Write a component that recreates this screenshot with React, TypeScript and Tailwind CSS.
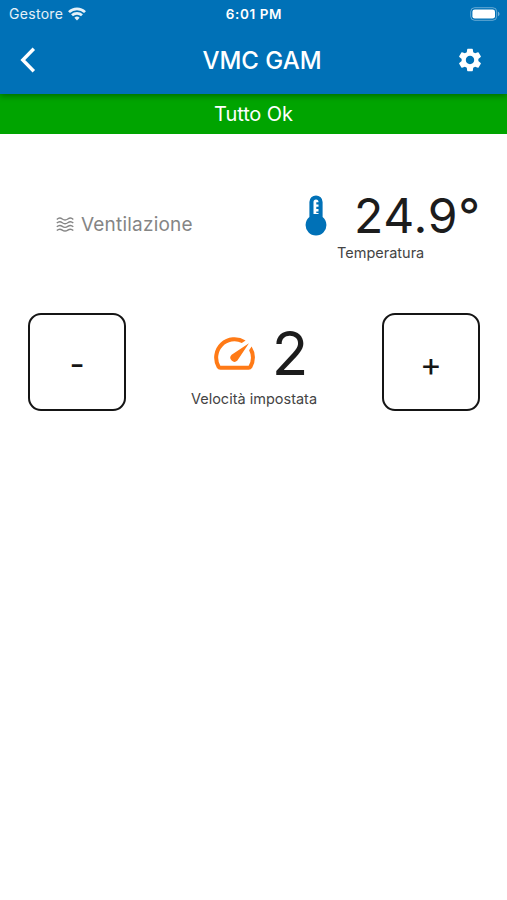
import React from "react";
import { MdOutlineSpeed, MdSettings } from "react-icons/md";

const WifiIcon: React.FC = () => (
  <svg viewBox="0 0 18 14" className="h-[14px] w-[18px]" fill="none" stroke="currentColor" strokeWidth="2.7">
    <path d="M1 5.1a11.5 11.5 0 0 1 16 0" />
    <path d="M4 8.3a7.2 7.2 0 0 1 10 0" />
    <path d="M6.4 10.7a3.8 3.8 0 0 1 5.2 0L9 13.4z" fill="currentColor" stroke="none" />
  </svg>
);

const BatteryIcon: React.FC = () => (
  <svg viewBox="0 0 31 14" className="h-[14px] w-[31px]">
    <rect x="0.7" y="0.7" width="26" height="12.6" rx="4" fill="none" stroke="white" strokeOpacity="0.4" strokeWidth="1" />
    <rect x="2.4" y="2.4" width="22.6" height="9.2" rx="2.4" fill="white" />
    <path d="M28 4.8c2 .7 2 3.7 0 4.4z" fill="white" fillOpacity="0.45" />
  </svg>
);

const ThermometerIcon: React.FC = () => (
  <svg viewBox="0 0 22 42" className="h-[42px] w-[22px]">
    <path d="M4.4 7a6.6 6.6 0 0 1 13.2 0v15.1a10.4 10.4 0 1 1-13.2 0z" fill="#0071b7" />
    <path
      d="M8.5 7a2.5 2.5 0 0 1 5 0v.2h-2.2v2.2h2.2v2.4h-2.2V14h2.2v2.4h-2.2V18h2.2v1h-5z"
      fill="white"
    />
  </svg>
);

const WavesIcon: React.FC = () => (
  <svg viewBox="0 0 18 16" className="h-[16px] w-[18px]" fill="none" stroke="#858585" strokeWidth="1.4">
    {[2.4, 6.1, 9.8, 13.5].map((y) => (
      <path key={y} d={`M.8 ${y}c2-1.8 3.6-1.8 5.5-.4s3.5 1.4 5.500 0 3.600-1.400 5.500.4`} />
    ))}
  </svg>
);

const StepButton: React.FC<{ label: string; children: React.ReactNode }> = ({ label, children }) => (
  <button
    aria-label={label}
    className="flex h-[98px] w-[98px] items-center justify-center rounded-[13px] border-2 border-[#151515] pt-[5px] text-[33px] leading-none text-[#151515]"
  >
    {children}
  </button>
);

export default function App() {
  return (
    <main className="h-[900px] w-[507px] overflow-hidden bg-white font-['Inter','Liberation_Sans',sans-serif] text-[#1c1c1c]">
      <header className="relative h-[94px] bg-[#0071b7] text-white shadow-[0_2px_6px_rgba(0,0,0,0.35)]">
        {/* Status bar */}
        <div className="grid h-[27px] grid-cols-3 items-center pl-[9px] pr-[6px]">
          <div className="flex items-center gap-[5px] text-[14px] tracking-[0.3px] text-white/90">
            <span>Gestore</span>
            <WifiIcon />
          </div>
          <div className="mr-[2px] pt-px text-center text-[13.500px] font-semibold tracking-[0.6px]">6:01 PM</div>
          <div className="flex justify-end">
            <BatteryIcon />
          </div>
        </div>

        {/* Title bar */}
        <div className="grid h-[66px] grid-cols-[1fr_auto_1fr] items-center px-[23px]">
          <svg viewBox="0 0 16 26" className="ml-[-3px] h-[26px] w-[16px]" fill="none" stroke="currentColor" strokeWidth="3.4">
            <path d="M13.8 1.8 2.8 13l11 11.2" />
          </svg>
          <h1 className="ml-[17px] pt-px text-[24px] font-medium">VMC GAM</h1>
          <MdSettings size={28} className="justify-self-end" />
        </div>
      </header>

      <div className="flex h-[40px] items-center justify-center bg-[#00a400] text-[20px] tracking-[-0.1px] text-white">
        Tutto Ok
      </div>

      {/* Readings */}
      <section className="flex h-[179px] justify-between pl-[56px] pr-[26px]">
        <div className="mt-[77px] flex h-[28px] items-center gap-[7px] self-start text-[19px] tracking-[0.2px] text-[#858585]">
          <WavesIcon />
          <span>Ventilazione</span>
        </div>
        <div className="flex w-[176px] flex-col pt-[53px]">
          <div className="flex h-[58px] items-center justify-between">
            <ThermometerIcon />
            <span className="text-[48px] leading-none tracking-[0.8px]">24.9°</span>
          </div>
          <span className="ml-[32px] mt-[-2px] text-[14.500px] leading-[20px] text-[#444]">Temperatura</span>
        </div>
      </section>

      {/* Fan speed */}
      <section className="flex items-start justify-between pl-[28px] pr-[27px]">
        <StepButton label="Diminuisci">-</StepButton>
        <div className="flex flex-col items-center pt-[10px]">
          <div className="ml-[10px] flex h-[60px] items-center gap-[13px]">
            <MdOutlineSpeed size={49} className="text-[#ff7a16]" />
            <span className="text-[60px] leading-none">2</span>
          </div>
          <span className="mt-[6px] text-[14.500px] leading-[20px] text-[#444]">Velocità impostata</span>
        </div>
        <StepButton label="Aumenta">+</StepButton>
      </section>
    </main>
  );
}
